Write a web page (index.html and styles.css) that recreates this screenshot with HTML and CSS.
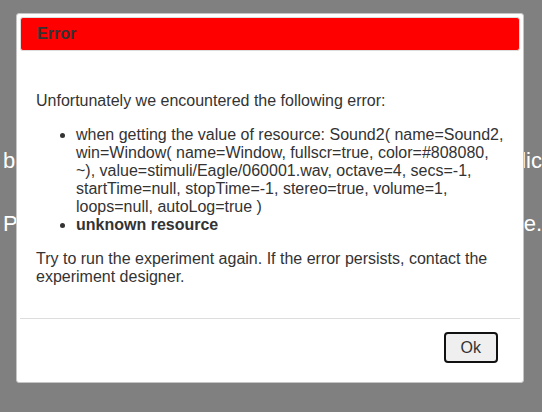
FILE: index.html
```html
<!DOCTYPE html>
<html>
<head>
<meta charset="utf-8">
<title>Error</title>
<link rel="stylesheet" href="styles.css">
</head>
<body>

<div class="scene">
	<div class="scene-line">
		<span>be part of this</span>
		<span>study, results are public</span>
	</div>
	<div class="scene-line">
		<span>Press the space bar</span>
		<span>to continue.</span>
	</div>
</div>

<div class="dialog">
	<div class="dialog-title">Error</div>
	<div class="dialog-content">
		<p>Unfortunately we encountered the following error:</p>
		<ul>
			<li>when getting the value of resource: Sound2( name=Sound2, win=Window( name=Window, fullscr=true, color=#808080, ~), value=stimuli/Eagle/060001.wav, octave=4, secs=-1, startTime=null, stopTime=-1, stereo=true, volume=1, loops=null, autoLog=true )</li>
			<li><b>unknown resource</b></li>
		</ul>
		<p>Try to run the experiment again. If the error persists, contact the experiment designer.</p>
	</div>
	<div class="dialog-buttons">
		<button class="btn">Ok</button>
	</div>
</div>

</body>
</html>
```

FILE: styles.css
```css
* {
	box-sizing: border-box;
}

html, body {
	margin: 0;
	padding: 0;
	height: 100%;
}

body {
	background: #808080;
	font-family: "Liberation Sans", Arial, sans-serif;
	font-size: 16px;
	overflow: hidden;
}

/* experiment screen behind the dialog */
.scene {
	padding: 148px 0 0 3px;
	color: #fff;
	font-size: 22px;
	line-height: 26px;
}

.scene-line {
	display: flex;
	justify-content: space-between;
	white-space: nowrap;
	margin-bottom: 37px;
}

/* error dialog */
.dialog {
	position: absolute;
	left: 16px;
	top: 13px;
	width: 508px;
	padding: 3px;
	background: #fff;
	border: 1px solid #c5c5c5;
	border-radius: 3px;
	color: #333;
}

.dialog-title {
	height: 34px;
	padding: 6px 16px;
	background: #ff0000;
	border: 1px solid #dddddd;
	border-radius: 3px;
	font-weight: bold;
	font-size: 16px;
	line-height: 20px;
	color: #333;
}

.dialog-content {
	padding: 41px 16px 8px 16px;
	line-height: normal;
}

.dialog-content p {
	margin: 0 0 16px 0;
}

.dialog-content ul {
	margin: 16px 0;
	padding-left: 40px;
}

.dialog-buttons {
	margin-top: 8px;
	padding: 5px 16px 8px 6px;
	border-top: 1px solid #dddddd;
	display: flex;
	justify-content: flex-end;
}

.btn {
	margin: 8px 6px 8px 0;
	padding: 4px 15px;
	background: #efefef;
	border: 2px solid #111;
	border-radius: 4px;
	font-family: "Liberation Sans", Arial, sans-serif;
	font-size: 16px;
	line-height: 19px;
	color: #333;
}
```
